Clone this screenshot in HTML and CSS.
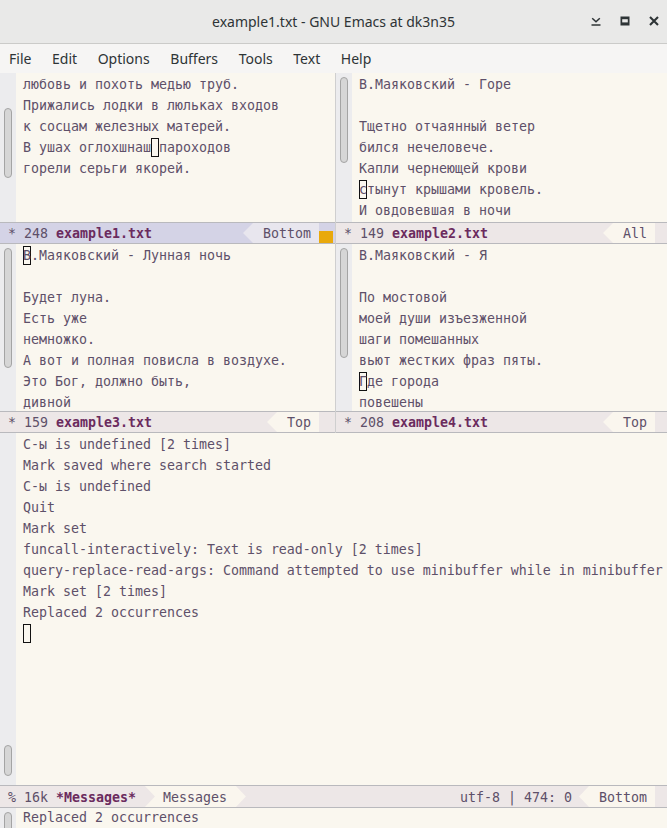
FILE: index.html
```html
<!DOCTYPE html>
<html lang="ru">
<head>
<meta charset="utf-8">
<title>example1.txt - GNU Emacs at dk3n35</title>
<link rel="stylesheet" href="styles.css">
</head>
<body>
<header class="titlebar">
  <span></span>
  <span class="title">example1.txt - GNU Emacs at dk3n35</span>
  <div class="controls">
    <svg class="ctl" viewBox="0 0 12 12" width="12" height="12"><path d="M2.2 3.2 L6 6.8 L9.8 3.2" fill="none" stroke="#2e3436" stroke-width="1.5"/><path d="M1.5 10 H10.5" stroke="#2e3436" stroke-width="1.5"/></svg>
    <svg class="ctl" viewBox="0 0 12 12" width="12" height="12"><rect x="1.5" y="1.5" width="9" height="9" fill="#2e3436"/><rect x="3.2" y="4.2" width="5.6" height="3.2" fill="#e9e9e8"/></svg>
    <svg class="ctl" viewBox="0 0 12 12" width="12" height="12"><path d="M2 2 L10 10 M10 2 L2 10" stroke="#2e3436" stroke-width="2.1"/></svg>
  </div>
</header>
<nav class="menubar">
  <span>File</span><span>Edit</span><span>Options</span><span>Buffers</span><span>Tools</span><span>Text</span><span>Help</span>
</nav>
<main class="frame">
  <div class="row row-top">
    <section class="win">
      <div class="body">
        <div class="sbar"><div class="thumb t1"></div></div>
        <div class="text">любовь и похоть медью труб.
Прижались лодки в люльках входов
к сосцам железных матерей.
В ушах оглохшнаш<span class="cur"> </span>пароходов
горели серьги якорей.</div>
      </div>
      <div class="modeline active left">
        <span>* 248 </span><b class="buf">example1.txt</b>
        <span class="seg-r">Bottom</span><span class="flag"></span>
      </div>
    </section>
    <div class="divider"></div>
    <section class="win">
      <div class="body">
        <div class="sbar"><div class="thumb t2"></div></div>
        <div class="text">В.Маяковский - Горе

Тщетно отчаянный ветер
бился нечеловече.
Капли чернеющей крови
<span class="cur">с</span>тынут крышами кровель.
И овдовевшая в ночи</div>
      </div>
      <div class="modeline right">
        <span>* 149 </span><b class="buf">example2.txt</b>
        <span class="seg-r">All</span>
      </div>
    </section>
  </div>
  <div class="row row-mid">
    <section class="win">
      <div class="body">
        <div class="sbar"><div class="thumb t3"></div></div>
        <div class="text"><span class="cur">В</span>.Маяковский - Лунная ночь

Будет луна.
Есть уже
немножко.
А вот и полная повисла в воздухе.
Это Бог, должно быть,
дивной</div>
      </div>
      <div class="modeline left">
        <span>* 159 </span><b class="buf">example3.txt</b>
        <span class="seg-r">Top</span>
      </div>
    </section>
    <div class="divider"></div>
    <section class="win">
      <div class="body">
        <div class="sbar"><div class="thumb t4"></div></div>
        <div class="text">В.Маяковский - Я

По мостовой
моей души изъезженной
шаги помешанных
вьют жестких фраз пяты.
<span class="cur">Г</span>де города
повешены</div>
      </div>
      <div class="modeline right">
        <span>* 208 </span><b class="buf">example4.txt</b>
        <span class="seg-r">Top</span>
      </div>
    </section>
  </div>
  <section class="win messages">
    <div class="body">
      <div class="sbar"><div class="thumb t5"></div></div>
      <div class="text">C-ы is undefined [2 times]
Mark saved where search started
C-ы is undefined
Quit
Mark set
funcall-interactively: Text is read-only [2 times]
query-replace-read-args: Command attempted to use minibuffer while in minibuffer
Mark set [2 times]
Replaced 2 occurrences
<span class="cur"> </span></div>
    </div>
    <div class="modeline right mm">
      <span>% 16k </span><b class="buf">*Messages*</b>
      <span class="seg-mid">Messages</span>
      <span class="enc">utf-8 | 474: 0</span>
      <span class="seg-r">Bottom</span>
    </div>
  </section>
  <div class="echo">
    <div class="sbar"><div class="thumb t6"></div></div>
    <div class="text">Replaced 2 occurrences</div>
  </div>
</main>
</body>
</html>
```
FILE: styles.css
```css
* { box-sizing: border-box; }

html, body {
  margin: 0;
  padding: 0;
}

body {
  width: 667px;
  height: 828px;
  overflow: hidden;
  background: #faf7ef;
  font-family: "DejaVu Sans Mono", monospace;
  color: #5e5069;
}

.titlebar {
  height: 44px;
  background: #e9e9e8;
  border-bottom: 1px solid #cbcbc9;
  display: grid;
  grid-template-columns: 1fr auto 1fr;
  align-items: center;
  font-family: "Noto Sans", sans-serif;
  font-size: 14px;
  color: #2e3436;
}

.title {
  padding-bottom: 1px;
}

.controls {
  justify-self: end;
  display: flex;
  gap: 17px;
  padding-right: 7px;
  padding-bottom: 2px;
}

.ctl {
  display: block;
}

.menubar {
  height: 29px;
  background: #f6f5f4;
  display: flex;
  align-items: center;
  gap: 20.6px;
  padding-left: 9px;
  padding-bottom: 1px;
  font-family: "Noto Sans", sans-serif;
  font-size: 14px;
  color: #2e3436;
}

.frame {
  display: grid;
  grid-template-rows: 171px 189px 375px 20px;
  height: 755px;
  font-size: 13.29px;
}

.row {
  display: grid;
  grid-template-columns: 335px 1px 331px;
  min-height: 0;
}

.divider {
  background: #cfcfcf;
}

.win {
  display: flex;
  flex-direction: column;
  min-height: 0;
  min-width: 0;
}

.body {
  flex: 1;
  display: flex;
  min-height: 0;
  overflow: hidden;
}

.sbar {
  width: 16px;
  flex: none;
  background: #ececee;
  padding-left: 4px;
}

.thumb {
  width: 8px;
  background: #d6d6d6;
  border: 1px solid #a4a4a4;
  border-radius: 4px;
}

.t1 { margin-top: 35px; height: 70px; }
.t2 { margin-top: 4px; height: 86px; }
.t3 { margin-top: 4px; height: 120px; }
.t4 { margin-top: 4px; height: 110px; }
.t5 { margin-top: 312px; height: 31px; }
.t6 { margin-top: 4px; height: 24px; }

.text {
  flex: 1;
  min-width: 0;
  padding: 1px 0 0 7px;
  background: #faf7ef;
  white-space: pre;
  line-height: 21px;
  overflow: hidden;
}

.cur {
  padding: 2.2px 0;
  box-shadow: inset 0 0 0 1px #111;
}

.modeline {
  height: 22px;
  flex: none;
  display: flex;
  align-items: center;
  padding-left: 8px;
  padding-top: 1px;
  background: #ede7e7;
  border-top: 1px solid #b9b9bd;
  border-bottom: 1px solid #b9b9bd;
  white-space: pre;
  line-height: 19px;
}

.modeline.left { padding-right: 16px; }
.modeline.right { padding-right: 12px; }

.modeline.active {
  background: #d4d3e6;
  padding-right: 2px;
}

.buf {
  color: #6b2b5e;
  font-weight: bold;
}

.seg-r {
  margin-left: auto;
  align-self: stretch;
  margin-top: -1px;
  padding: 1px 8px 0 20px;
  display: flex;
  align-items: center;
  background: #faf6ee;
  clip-path: polygon(10px 0, 100% 0, 100% 100%, 10px 100%, 0 50%);
}

.active .seg-r {
  background: #e8e6ee;
}

.flag {
  align-self: flex-end;
  width: 14px;
  height: 12px;
  background: #e9a90c;
}

.messages .modeline {
  height: 23px;
}

.seg-mid {
  align-self: stretch;
  margin-top: -1px;
  display: flex;
  align-items: center;
  margin-left: 9px;
  padding: 1px 19px 0 18px;
  background: #faf6ee;
  clip-path: polygon(0 0, calc(100% - 10px) 0, 100% 50%, calc(100% - 10px) 100%, 0 100%, 10px 50%);
}

.enc {
  margin-left: auto;
  margin-right: 7px;
}

.mm .seg-r {
  margin-left: 0;
}

.echo {
  display: flex;
  min-height: 0;
  overflow: hidden;
}

.echo .text {
  padding-top: 0;
  line-height: 20px;
}
```
